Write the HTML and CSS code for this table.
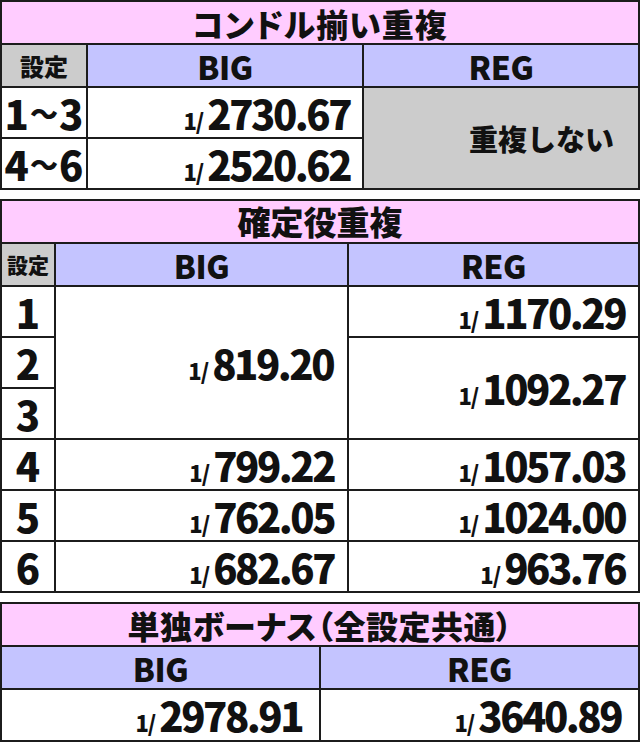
FILE: index.html
```html
<!DOCTYPE html>
<html lang="ja">
<head>
<meta charset="utf-8">
<link rel="stylesheet" href="styles.css">
</head>
<body>
<div class="tbl t1">
  <div class="cell title span3">コンドル揃い重複</div>
  <div class="cell gray set">設定</div>
  <div class="cell head">BIG</div>
  <div class="cell head">REG</div>
  <div class="cell lab">1<span class="wave">〜</span>3</div>
  <div class="cell val"><span class="num"><span class="fr">1/</span>2730.67</span></div>
  <div class="cell gray none">重複しない</div>
  <div class="cell lab">4<span class="wave">〜</span>6</div>
  <div class="cell val"><span class="num"><span class="fr">1/</span>2520.62</span></div>
</div>

<div class="tbl t2">
  <div class="cell title span3">確定役重複</div>
  <div class="cell gray set sm">設定</div>
  <div class="cell head">BIG</div>
  <div class="cell head">REG</div>

  <div class="cell lab">1</div>
  <div class="cell val big3"><span class="num"><span class="fr">1/</span>819.20</span></div>
  <div class="cell val"><span class="num"><span class="fr">1/</span>1170.29</span></div>

  <div class="cell lab">2</div>
  <div class="cell val reg23"><span class="num"><span class="fr">1/</span>1092.27</span></div>
  <div class="cell lab">3</div>

  <div class="cell lab">4</div>
  <div class="cell val"><span class="num"><span class="fr">1/</span>799.22</span></div>
  <div class="cell val"><span class="num"><span class="fr">1/</span>1057.03</span></div>

  <div class="cell lab">5</div>
  <div class="cell val"><span class="num"><span class="fr">1/</span>762.05</span></div>
  <div class="cell val"><span class="num"><span class="fr">1/</span>1024.00</span></div>

  <div class="cell lab">6</div>
  <div class="cell val"><span class="num"><span class="fr">1/</span>682.67</span></div>
  <div class="cell val"><span class="num"><span class="fr">1/</span>963.76</span></div>
</div>

<div class="tbl t3">
  <div class="cell title span2 palt">単独ボーナス（全設定共通）</div>
  <div class="cell head">BIG</div>
  <div class="cell head">REG</div>
  <div class="cell val"><span class="num"><span class="fr">1/</span>2978.91</span></div>
  <div class="cell val"><span class="num"><span class="fr">1/</span>3640.89</span></div>
</div>
</body>
</html>
```

FILE: styles.css
```css
html, body {
  margin: 0;
  padding: 0;
  background: #ffffff;
}

body {
  width: 640px;
  font-family: "Noto Sans CJK JP", "Noto Sans", sans-serif;
  font-weight: 900;
  color: #111111;
}

.tbl {
  display: grid;
  gap: 2px;
  padding: 2px;
  background: #1c1c1c;
  box-sizing: border-box;
  width: 640px;
}

.t1 {
  grid-template-columns: 84px 274px 274px;
  grid-template-rows: 41px 41px 49px 49px;
}

.t2 {
  margin-top: 9px;
  grid-template-columns: 52px 291px 289px;
  grid-template-rows: 41px 41px repeat(6, 49px);
}

.t3 {
  margin-top: 9px;
  grid-template-columns: 317px 317px;
  grid-template-rows: 41px 41px 50px;
}

.cell {
  background: #ffffff;
  display: flex;
  align-items: center;
  justify-content: center;
  line-height: 1;
  white-space: nowrap;
}

.span3 { grid-column: 1 / span 3; }
.span2 { grid-column: 1 / span 2; }

.title {
  background: #ffccff;
  font-size: 33px;
}

.t1 .title {
  font-size: 32px;
  font-feature-settings: "palt";
  letter-spacing: 1px;
}

.palt {
  font-feature-settings: "palt";
  font-size: 32px;
  letter-spacing: 0.5px;
}

.head {
  background: #c4c4ff;
  font-size: 32px;
  letter-spacing: -0.5px;
}

.gray {
  background: #cccccc;
}

.set {
  font-size: 24px;
}

.set.sm {
  font-size: 21px;
}

.lab {
  font-size: 40px;
}

.wave {
  font-size: 28px;
  margin: 0 1px;
}

.none {
  grid-row: span 2;
  font-size: 29px;
  justify-content: flex-end;
  padding-right: 24px;
}

.val {
  justify-content: flex-end;
  padding-right: 12px;
}

.t2 .val { padding-right: 13px; }
.t2 .big3 { padding-right: 14px; }
.t3 .val { padding-right: 17px; }

.num {
  font-size: 40px;
  letter-spacing: -2.5px;
}

.fr {
  font-size: 22px;
  letter-spacing: -1px;
  margin-right: 4px;
}

.big3 {
  grid-row: span 3;
}

.reg23 {
  grid-column: 3;
  grid-row: span 2;
}
```
